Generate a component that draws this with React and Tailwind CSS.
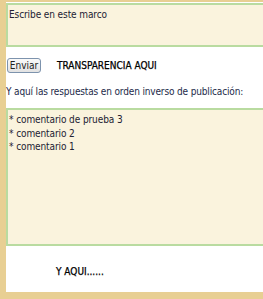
export default function App() {
  return (
    <div className="w-[263px] h-[299px] overflow-hidden bg-[#e8cf93] pl-[6px] pt-[2px] pb-[7px] font-['DejaVu_Sans_Condensed',sans-serif]">
      <div className="h-full bg-white flex flex-col">
        {/* Write box */}
        <div className="mt-[1px] h-[44px] w-[300px] shrink-0 border-2 border-[#b9dba0] bg-[#faf3dd] px-[1px] pt-[2px] text-[10px] tracking-[-0.1px] text-[#222233]">
          Escribe en este marco
        </div>

        {/* Send row */}
        <div className="mt-[11px] flex items-center">
          <button className="ml-[1px] h-[15px] w-[34px] rounded-[3px] border border-[#7d93ad] bg-gradient-to-b from-[#fafafa] to-[#e2e2e2] text-[10px] leading-none text-[#222]">
            Enviar
          </button>
          <span className="ml-[16px] text-[10px] text-black [-webkit-text-stroke:0.25px_black]">TRANSPARENCIA AQUI</span>
        </div>

        <p className="mt-[11px] whitespace-nowrap text-[10px] tracking-[-0.15px] text-[#1d2a4a]">
          Y aquí las respuestas en orden inverso de publicación:
        </p>

        {/* Replies */}
        <div className="mt-[9px] h-[138px] w-[300px] shrink-0 border-2 border-[#b9dba0] bg-[#faf3dd] px-[1px] pt-[3px] text-[10px] leading-[13.5px] tracking-[-0.1px] text-[#222233]">
          <div>* comentario de prueba 3</div>
          <div>* comentario 2</div>
          <div>* comentario 1</div>
        </div>

        <div className="mt-[18px] ml-[50px] text-[10px] text-black [-webkit-text-stroke:0.25px_black]">Y AQUI......</div>
      </div>
    </div>
  );
}
